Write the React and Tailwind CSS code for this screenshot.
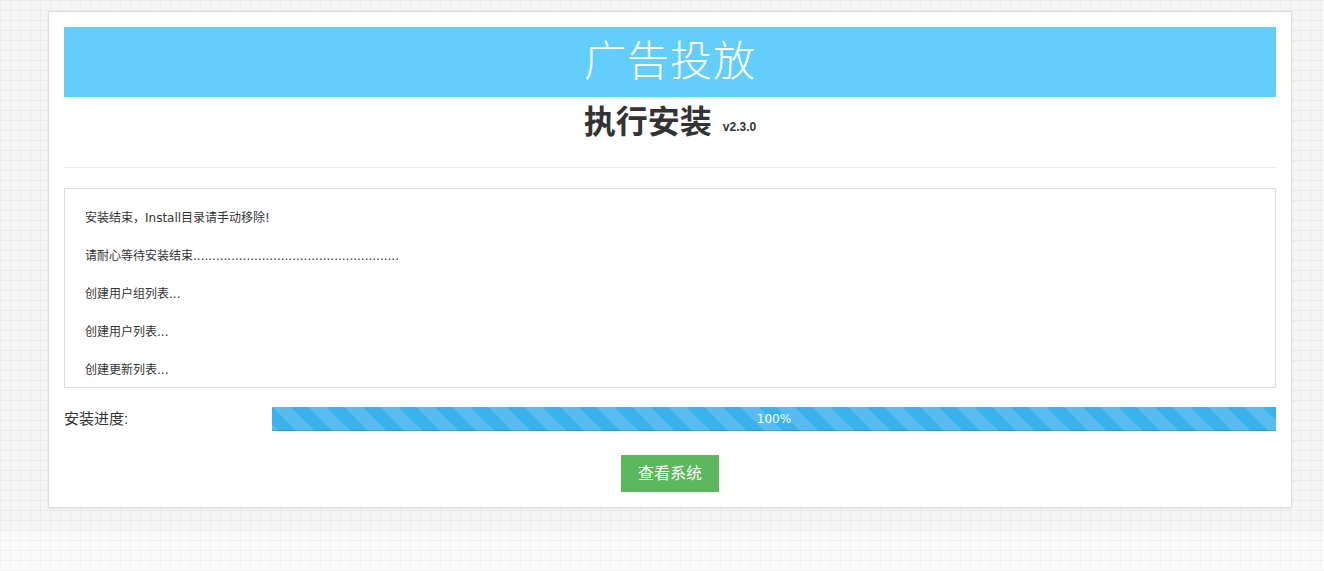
import React from 'react';

const logs = [
  '安装结束，Install目录请手动移除!',
  '请耐心等待安装结束......................................................',
  '创建用户组列表...',
  '创建用户列表...',
  '创建更新列表...',
  '创建广告位列表...',
];

const FONT = { fontFamily: '"Liberation Sans", "Noto Sans CJK SC", sans-serif' };
const LOG_FONT = { fontFamily: '"DejaVu Sans", "Noto Sans CJK SC", sans-serif' };

export default function App() {
  return (
    <div className="min-h-screen w-full bg-[#fafafa] bg-[linear-gradient(#f1f1f1_1px,transparent_1px),linear-gradient(90deg,#f1f1f1_1px,transparent_1px)] bg-[size:10px_10px] text-[#333]" style={FONT}>
      <div className="h-[530px] pt-[11px] bg-[#f5f5f5] bg-[linear-gradient(#ebebeb_1px,transparent_1px),linear-gradient(90deg,#ebebeb_1px,transparent_1px)] bg-[size:10px_10px]">
        {/* main card */}
        <div className="ml-[48px] w-[1244px] bg-white border border-[#dddddd] shadow-[0_1px_3px_rgba(0,0,0,0.06)] px-[15px] pt-[15px] pb-[15px]">
          <div className="h-[70px] bg-[#63cdfb] flex items-center justify-center">
            <h1 className="text-white text-[42px] font-light leading-none tracking-[1px]">广告投放</h1>
          </div>

          <div className="mt-[5px] h-[40px] flex items-center justify-center">
            <h2 className="text-[32px] font-bold leading-none text-[#333]">执行安装</h2>
            <span className="ml-[11px] mt-[10px] text-[12px] font-bold text-[#333]">v2.3.0</span>
          </div>

          <hr className="mt-[25px] border-0 border-t border-[#eeeeee]" />

          {/* install log */}
          <div className="mt-[20px] h-[200px] overflow-hidden border border-[#dddddd] px-[20px] pt-[20px]" style={LOG_FONT}>
            {logs.map((l, i) => (
              <p key={i} className="h-[18px] mb-[20px] text-[12px] leading-[18px] text-[#333] whitespace-nowrap">{l}</p>
            ))}
          </div>

          {/* progress */}
          <div className="mt-[19px] flex items-center">
            <div className="w-[208px] text-[15px] leading-[24px] text-[#333]">安装进度:</div>
            <div className="flex-1 h-[24px] bg-[#39b2ee] bg-[linear-gradient(45deg,rgba(255,255,255,.15)_25%,transparent_25%,transparent_50%,rgba(255,255,255,.15)_50%,rgba(255,255,255,.15)_75%,transparent_75%,transparent)] bg-[size:36px_36px] shadow-[inset_0_-1px_0_rgba(0,0,0,0.15)] flex items-center justify-center">
              <span className="text-white text-[12px] leading-none" style={LOG_FONT}>100%</span>
            </div>
          </div>

          <div className="mt-[24px] flex justify-center">
            <button className="w-[98px] h-[37px] bg-[#5cb85c] text-white text-[16px]">查看系统</button>
          </div>
        </div>
      </div>
    </div>
  );
}
